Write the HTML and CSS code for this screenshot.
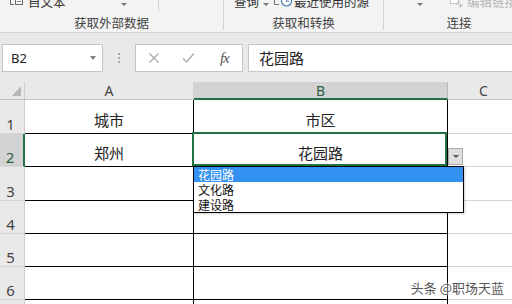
FILE: index.html
```html
<!DOCTYPE html>
<html lang="zh">
<head>
<meta charset="utf-8">
<title>Sheet</title>
<link rel="stylesheet" href="styles.css">
</head>
<body>
<div class="app">
  <div class="ribbon">
    <div class="group g1">
      <div class="tools">
        <svg class="ico ico-doc" width="14" height="12" viewBox="0 0 14 12">
          <path d="M1.5 0V8.5H5" fill="none" stroke="#666" stroke-width="1"/>
          <rect x="6.5" y="-2.5" width="7" height="11" fill="#fff" stroke="#666" stroke-width="1"/>
          <path d="M8 1.5H12M8 3.5H12M8 5.5H12" stroke="#888" stroke-width="1"/>
        </svg>
        <span class="t">自文本</span>
        <span class="caret c1"></span>
        <span class="vsep"></span>
      </div>
      <div class="glabel">获取外部数据</div>
    </div>
    <div class="group g2">
      <div class="tools">
        <span class="t">查询</span>
        <span class="caret c2"></span>
        <svg class="ico ico-clock" width="20" height="12" viewBox="0 0 20 12">
          <path d="M1.5 0V8.5H6" fill="none" stroke="#777" stroke-width="1"/>
          <circle cx="13.5" cy="5" r="5" fill="#fff" stroke="#4f7bb5" stroke-width="1.2"/>
          <path d="M13.5 2V5.3H16" fill="none" stroke="#4f7bb5" stroke-width="1.1"/>
        </svg>
        <span class="t">最近使用的源</span>
      </div>
      <div class="glabel">获取和转换</div>
    </div>
    <div class="group g3">
      <div class="tools">
        <span class="caret c3"></span>
        <svg class="ico ico-link" width="14" height="12" viewBox="0 0 14 12">
          <rect x="0.5" y="-2.5" width="8" height="10" fill="#fff" stroke="#c4c4c4"/>
          <path d="M6 8.5L9.5 5M8.5 9.5H12.5M10.5 7.5V11.5" fill="none" stroke="#bfbfbf" stroke-width="1.2"/>
        </svg>
        <span class="t faded">编辑链接</span>
      </div>
      <div class="glabel">连接</div>
    </div>
  </div>

  <div class="fbar">
    <div class="namebox"><span class="nb-text">B2</span><span class="nb-caret"></span></div>
    <div class="dots"><i></i><i></i><i></i></div>
    <div class="fbtns">
      <span class="fbtn">
        <svg width="12" height="12" viewBox="0 0 12 12"><path d="M1.5 1.5L10.5 10.5M10.5 1.5L1.5 10.5" stroke="#a9a9a9" stroke-width="1.3"/></svg>
      </span>
      <span class="fbtn">
        <svg width="13" height="12" viewBox="0 0 13 12"><path d="M1 6.5L4.5 10L12 1.5" fill="none" stroke="#a9a9a9" stroke-width="1.3"/></svg>
      </span>
      <span class="fbtn fx">fx</span>
    </div>
    <div class="finput">花园路</div>
  </div>

  <div class="sheet">
    <div class="corner"><span class="tri"></span></div>
    <div class="ch">A</div>
    <div class="ch ch-sel">B</div>
    <div class="ch">C</div>

    <div class="rh">1</div>
    <div class="c">城市</div>
    <div class="c">市区</div>
    <div class="cc"></div>

    <div class="rh rh-sel">2</div>
    <div class="c">郑州</div>
    <div class="c c-sel">花园路</div>
    <div class="cc"></div>

    <div class="rh">3</div>
    <div class="c"></div>
    <div class="c"></div>
    <div class="cc"></div>

    <div class="rh">4</div>
    <div class="c"></div>
    <div class="c"></div>
    <div class="cc"></div>

    <div class="rh">5</div>
    <div class="c"></div>
    <div class="c"></div>
    <div class="cc"></div>

    <div class="rh">6</div>
    <div class="c"></div>
    <div class="c"></div>
    <div class="cc"></div>

    <div class="rh">7</div>
    <div class="c"></div>
    <div class="c"></div>
    <div class="cc"></div>
  </div>

  <div class="dd-btn"><span class="dd-tri"></span></div>
  <ul class="dd-list">
    <li class="on">花园路</li>
    <li>文化路</li>
    <li>建设路</li>
  </ul>

  <div class="watermark">头条 @职场天蓝</div>
</div>
</body>
</html>
```

FILE: styles.css
```css
* { box-sizing: border-box; }

html, body {
  margin: 0;
  padding: 0;
}

body {
  width: 512px;
  height: 304px;
  overflow: hidden;
  background: #fff;
  font-family: "Noto Sans CJK SC", "Noto Sans", sans-serif;
  color: #222;
}

.app {
  position: relative;
  width: 512px;
  height: 304px;
  overflow: hidden;
}

/* ---------- ribbon ---------- */
.ribbon {
  display: flex;
  height: 33px;
  background: #f3f3f3;
  border-bottom: 1px solid #d6d6d6;
  overflow: hidden;
}

.group {
  flex: none;
  height: 30px;
  display: flex;
  flex-direction: column;
  border-right: 1px solid #d3d3d3;
}

.g1 { width: 224px; }
.g2 { width: 160px; }
.g3 { width: 150px; border-right: none; }

.tools {
  display: flex;
  align-items: center;
  height: 16px;
  margin-top: -6px;
  line-height: 16px;
  font-size: 12.5px;
  color: #333;
  white-space: nowrap;
}

.g1 .tools { padding-left: 9px; }
.g2 .tools { padding-left: 10px; }
.g3 .tools { padding-left: 33px; }

.ico { flex: none; display: block; }
.ico-doc { margin-right: 5px; }
.ico-clock { margin-left: 4px; margin-right: 1px; }
.ico-link { margin-left: 27px; margin-right: 3px; }

.t.faded { color: #b9b9b9; }

.caret {
  flex: none;
  width: 0;
  height: 0;
  margin-top: 4px;
  border-left: 3px solid transparent;
  border-right: 3px solid transparent;
  border-top: 3px solid #777;
}

.c1 { margin-left: 55px; }
.c2 { margin-left: 4px; }

.vsep {
  flex: none;
  align-self: flex-start;
  width: 1px;
  height: 11px;
  margin-top: 6px;
  margin-left: 31px;
  background: #d0d0d0;
}

.glabel {
  margin-top: 5px;
  line-height: 16px;
  font-size: 12.5px;
  color: #444;
  text-align: center;
}

/* ---------- formula bar ---------- */
.fbar {
  display: flex;
  align-items: flex-start;
  height: 49px;
  padding-top: 11px;
  background: #e9e9e9;
}

.namebox {
  flex: none;
  display: flex;
  align-items: center;
  justify-content: space-between;
  width: 101px;
  height: 28px;
  margin-left: 2px;
  padding: 0 6px 0 8px;
  background: #fff;
  border: 1px solid #c6c6c6;
}

.nb-text {
  font-family: "Noto Sans", sans-serif;
  font-size: 13px;
  color: #222;
}

.nb-caret {
  width: 0;
  height: 0;
  border-left: 3.5px solid transparent;
  border-right: 3.5px solid transparent;
  border-top: 4px solid #808080;
}

.dots {
  flex: none;
  width: 32px;
  height: 28px;
  display: flex;
  flex-direction: column;
  align-items: center;
  justify-content: center;
  gap: 2px;
}

.dots i {
  display: block;
  width: 2px;
  height: 2px;
  background: #a8a8a8;
}

.fbtns {
  flex: none;
  display: flex;
  align-items: center;
  width: 108px;
  height: 28px;
  background: #fff;
  border: 1px solid #c6c6c6;
}

.fbtn {
  width: 36px;
  display: flex;
  justify-content: center;
  align-items: center;
}

.fbtn svg { display: block; }

.fx {
  font-family: "Liberation Serif", "DejaVu Serif", serif;
  font-style: italic;
  font-size: 15px;
  color: #555;
  letter-spacing: -1px;
}

.finput {
  flex: 1;
  height: 28px;
  margin-left: 5px;
  padding-left: 10px;
  background: #fff;
  border: 1px solid #c6c6c6;
  border-right: none;
  font-size: 15px;
  line-height: 26px;
  color: #222;
}

/* ---------- sheet ---------- */
.sheet {
  display: grid;
  grid-template-columns: 25px 169px 254px 72px;
  grid-template-rows: 18px 34px 33px 34px 33px 33px 33px 33px;
}

.corner {
  position: relative;
  background: #e9e9e9;
  border-right: 1px solid #cfcfcf;
  border-bottom: 1px solid #c4c4c4;
}

.tri {
  position: absolute;
  right: 3px;
  bottom: 3px;
  width: 0;
  height: 0;
  border-left: 9px solid transparent;
  border-bottom: 10px solid #b8b8b8;
}

.ch {
  background: #e9e9e9;
  border-right: 1px solid #d0d0d0;
  border-bottom: 1px solid #c4c4c4;
  font-family: "Noto Sans", sans-serif;
  font-size: 14px;
  line-height: 17px;
  text-align: center;
  color: #444;
}

.ch-sel {
  background: #d3d3d3;
  border-right-color: #b9b9b9;
  border-bottom: 2px solid #217346;
  color: #2d5f40;
}

.rh {
  display: flex;
  align-items: flex-end;
  justify-content: center;
  padding-right: 3px;
  padding-bottom: 1px;
  background: #e9e9e9;
  border-right: 1px solid #cfcfcf;
  border-bottom: 1px solid #d6d6d6;
  font-family: "Noto Sans", sans-serif;
  font-size: 15px;
  line-height: 16px;
  color: #444;
}

.rh-sel {
  background: #d3d3d3;
  border-right: 2px solid #217346;
  color: #2d5f40;
}

.c {
  display: flex;
  align-items: center;
  justify-content: center;
  padding-top: 5px;
  border-right: 1px solid #000;
  border-bottom: 1px solid #000;
  font-size: 15px;
  color: #222;
}

.c-sel { position: relative; }

.c-sel::after {
  content: "";
  position: absolute;
  top: -2px;
  left: -2px;
  right: 0;
  bottom: 0;
  border: 2px solid #217346;
}

.cc {
  border-right: 1px solid #d4d4d4;
  border-bottom: 1px solid #d4d4d4;
}

/* ---------- data validation dropdown ---------- */
.dd-btn {
  position: absolute;
  left: 448px;
  top: 148px;
  width: 15px;
  height: 17px;
  display: flex;
  align-items: center;
  justify-content: center;
  background: #dedede;
  border: 1px solid #a9a9a9;
}

.dd-tri {
  width: 0;
  height: 0;
  border-left: 3px solid transparent;
  border-right: 3px solid transparent;
  border-top: 3px solid #555;
}

.dd-list {
  position: absolute;
  left: 193px;
  top: 166px;
  width: 271px;
  height: 47px;
  margin: 0;
  padding: 0;
  list-style: none;
  background: #fff;
  border: 1px solid #000;
  box-shadow: 1px 1px 2px rgba(0, 0, 0, 0.18);
}

.dd-list li {
  height: 15px;
  padding-left: 4px;
  font-size: 12px;
  line-height: 15px;
  color: #111;
}

.dd-list li.on {
  background: #3391f2;
  color: #fff;
}

.watermark {
  position: absolute;
  right: 8px;
  bottom: 8px;
  font-size: 13px;
  line-height: 16px;
  color: #555;
  text-shadow: 0 0 2px #fff, 0 0 2px #fff;
}
```
